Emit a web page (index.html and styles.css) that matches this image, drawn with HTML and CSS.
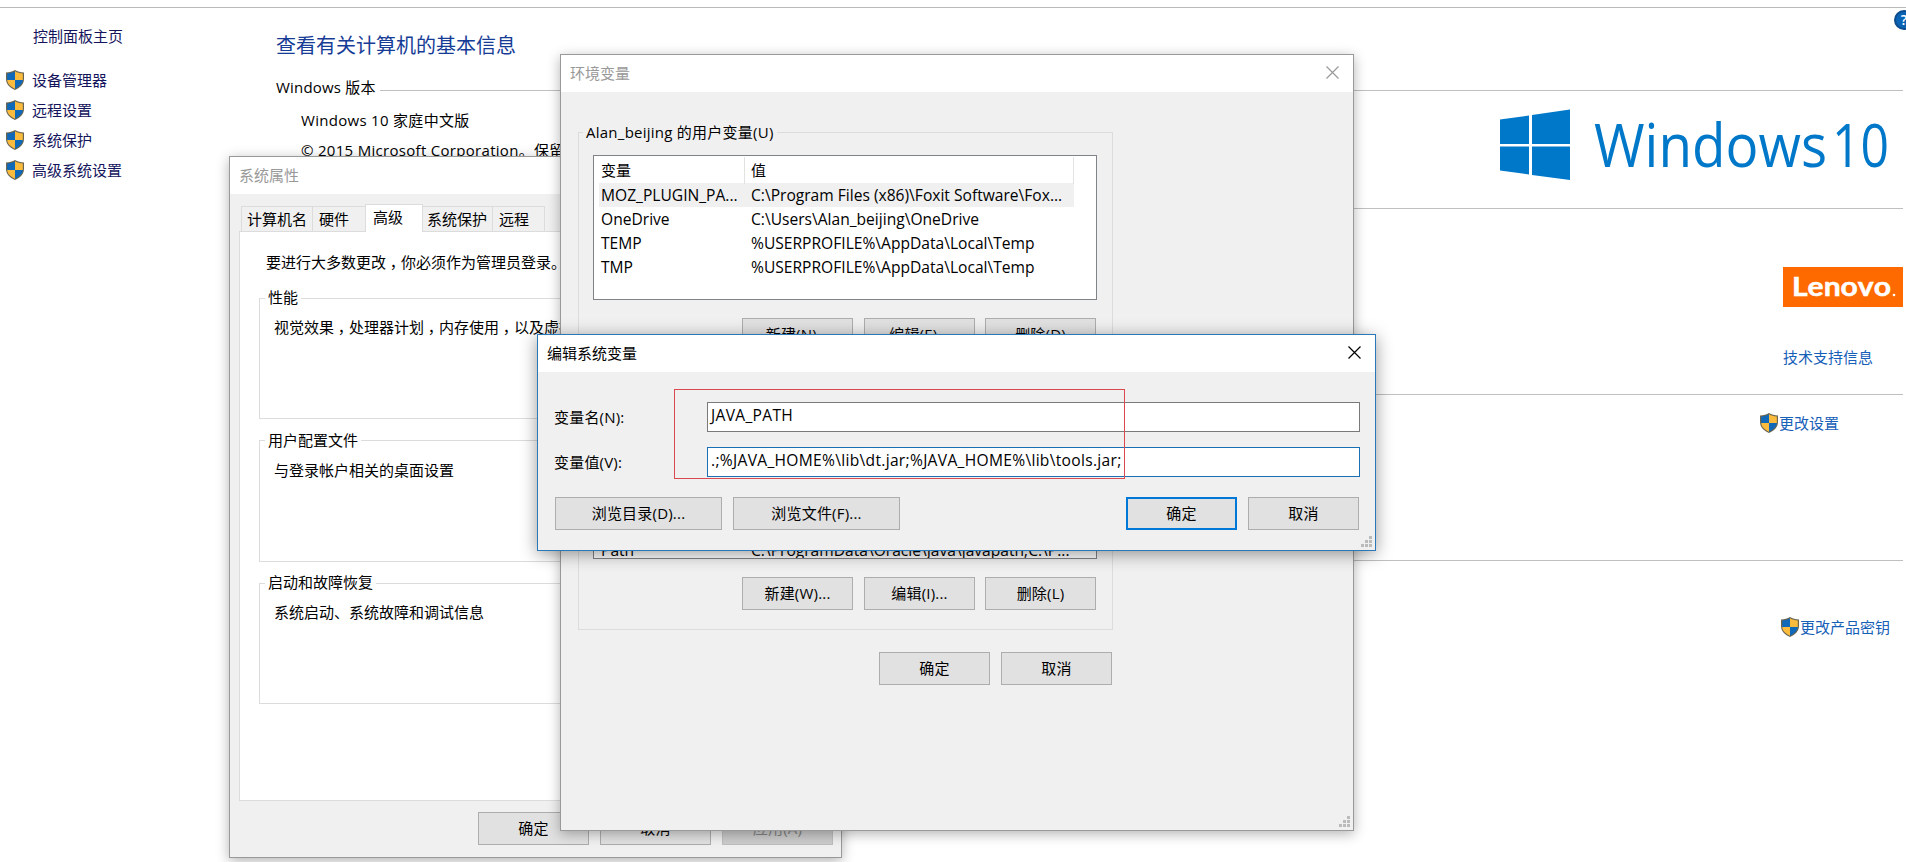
FILE: index.html
```html
<!DOCTYPE html>
<html lang="zh-CN">
<head>
    <meta charset="UTF-8">
    <meta name="viewport" content="width=device-width, initial-scale=1.0">
    <title>系统</title>
    <link rel="stylesheet" href="styles.css">
</head>
<body>
    <!-- Shared icons -->
    <svg class="defs" width="0" height="0">
        <symbol id="shield" viewBox="0 0 18 20">
            <path fill="#6b6550" d="M9 0C6.500 1.600 3.500 2.400 0 2.500V9c0 5 3.500 8.600 9 11 5.500-2.400 9-6 9-11V2.500C14.500 2.400 11.500 1.600 9 0z"/>
            <path fill="#0f68b8" d="M9 1.300C6.800 2.600 4.200 3.400 1.200 3.600V10H9z"/>
            <path fill="#fbbc3d" d="M9 1.300c2.200 1.300 4.800 2.100 7.800 2.300V10H9z"/>
            <path fill="#fbbc3d" d="M1.200 10H9v8.800C4.400 16.700 1.500 13.900 1.200 10z"/>
            <path fill="#0f68b8" d="M16.800 10H9v8.800c4.600-2.100 7.500-4.900 7.800-8.800z"/>
        </symbol>
        <symbol id="close" viewBox="0 0 13 13">
            <path fill="none" stroke="currentColor" stroke-width="1.200" d="M.5.5l12 12M12.500.5l-12 12"/>
        </symbol>
        <symbol id="grip" viewBox="0 0 11 11">
            <path fill="currentColor" d="M8 0h3v3H8zM4 4h3v3H4zM8 4h3v3H8zM0 8h3v3H0zM4 8h3v3H4zM8 8h3v3H8z"/>
        </symbol>
    </svg>

    <div class="page">
        <nav class="sidebar">
            <a class="home">控制面板主页</a>
            <a><svg class="shield"><use href="#shield"/></svg>设备管理器</a>
            <a><svg class="shield"><use href="#shield"/></svg>远程设置</a>
            <a><svg class="shield"><use href="#shield"/></svg>系统保护</a>
            <a><svg class="shield"><use href="#shield"/></svg>高级系统设置</a>
        </nav>

        <main class="content">
            <h1>查看有关计算机的基本信息</h1>

            <div class="section-title"><span>Windows 版本</span></div>
            <section class="edition">
                <div class="edition-text">
                    <p>Windows 10 家庭中文版</p>
                    <p>© 2015 Microsoft Corporation。保留所有权利。</p>
                </div>
                <svg class="win-logo" width="390" height="80" viewBox="0 0 390 80">
                    <g fill="#0078c9">
                        <path d="M0 14.500L29 10.500V39H0zM32 10L70 4.500V39H32zM0 41.500H29V69.500L0 65.500zM32 41.500H70V75L32 70z"/>
                        <text x="94" y="61.500" textLength="233" lengthAdjust="spacingAndGlyphs">Windows</text>
                        <text x="332" y="61.500" textLength="57" lengthAdjust="spacingAndGlyphs">10</text>
                    </g>
                </svg>
            </section>

            <section class="support">
                <div class="support-box">
                    <svg class="lenovo" width="120" height="40" viewBox="0 0 120 40">
                        <rect width="120" height="40" fill="#ff6a00"/>
                        <text x="9" y="29" textLength="99" lengthAdjust="spacingAndGlyphs">Lenovo</text>
                        <circle cx="111" cy="28" r="1.300" fill="#fff"/>
                    </svg>
                    <a>技术支持信息</a>
                </div>
            </section>

            <section class="settings">
                <a><svg class="shield"><use href="#shield"/></svg>更改设置</a>
            </section>

            <section class="activation">
                <a><svg class="shield"><use href="#shield"/></svg>更改产品密钥</a>
            </section>
        </main>
        <div class="help">?</div>
    </div>

    <!-- System properties -->
    <div class="window sys-window">
        <div class="titlebar">系统属性</div>
        <div class="tabs">
            <span class="tab tab-name">计算机名</span>
            <span class="tab tab-hardware">硬件</span>
            <span class="tab tab-advanced active">高级</span>
            <span class="tab tab-protect">系统保护</span>
            <span class="tab tab-remote">远程</span>
        </div>
        <div class="tab-page">
            <p class="hint">要进行大多数更改<i>，</i>你必须作为管理员登录。</p>
            <fieldset>
                <legend>性能</legend>
                视觉效果<i>，</i>处理器计划<i>，</i>内存使用<i>，</i>以及虚拟内存
            </fieldset>
            <fieldset>
                <legend>用户配置文件</legend>
                与登录帐户相关的桌面设置
            </fieldset>
            <fieldset>
                <legend>启动和故障恢复</legend>
                系统启动、系统故障和调试信息
            </fieldset>
        </div>
        <div class="buttons">
            <button>确定</button>
            <button>取消</button>
            <button disabled>应用(A)</button>
        </div>
    </div>

    <!-- Environment variables -->
    <div class="window env-window">
        <div class="titlebar">环境变量<svg class="close"><use href="#close"/></svg></div>
        <fieldset class="user-vars">
            <legend>Alan_beijing 的用户变量(U)</legend>
            <div class="list">
                <div class="row head"><span>变量</span><span>值</span></div>
                <div class="row selected"><span>MOZ_PLUGIN_PA...</span><span>C:\Program Files (x86)\Foxit Software\Fox...</span></div>
                <div class="row"><span>OneDrive</span><span>C:\Users\Alan_beijing\OneDrive</span></div>
                <div class="row"><span>TEMP</span><span>%USERPROFILE%\AppData\Local\Temp</span></div>
                <div class="row"><span>TMP</span><span>%USERPROFILE%\AppData\Local\Temp</span></div>
            </div>
            <div class="buttons">
                <button>新建(N)...</button>
                <button>编辑(E)...</button>
                <button>删除(D)</button>
            </div>
        </fieldset>
        <fieldset class="system-vars">
            <legend>系统变量(S)</legend>
            <div class="list">
                <div class="row"><span>Path</span><span>C:\ProgramData\Oracle\Java\javapath;C:\P...</span></div>
            </div>
            <div class="buttons">
                <button>新建(W)...</button>
                <button>编辑(I)...</button>
                <button>删除(L)</button>
            </div>
        </fieldset>
        <div class="buttons env-actions">
            <button>确定</button>
            <button>取消</button>
        </div>
        <svg class="grip"><use href="#grip"/></svg>
    </div>

    <!-- Edit system variable -->
    <div class="window edit-window">
        <div class="titlebar">编辑系统变量<svg class="close"><use href="#close"/></svg></div>
        <div class="field">
            <label>变量名(N):</label>
            <div class="input">JAVA_PATH</div>
        </div>
        <div class="field">
            <label>变量值(V):</label>
            <div class="input focus">.;%JAVA_HOME%\lib\dt.jar;%JAVA_HOME%\lib\tools.jar;</div>
        </div>
        <div class="buttons">
            <button class="wide">浏览目录(D)...</button>
            <button class="wide">浏览文件(F)...</button>
            <button class="default">确定</button>
            <button>取消</button>
        </div>
        <div class="highlight"></div>
        <svg class="grip"><use href="#grip"/></svg>
    </div>
</body>
</html>
```
FILE: styles.css
```css
* {
    box-sizing: border-box;
}

body {
    margin: 0;
    height: 862px;
    position: relative;
    overflow: hidden;
    background-color: #fff;
    color: #000;
    font-family: "Open Sans", "Noto Sans CJK SC", sans-serif;
    font-size: 15px;
    font-weight: 400;
    font-kerning: none;
    line-height: 20px;
    white-space: nowrap;
}

p, h1 {
    margin: 0;
    font-weight: inherit;
}

/* full width comma, centred in its cell */
i {
    display: inline-block;
    width: 15px;
    font-style: normal;
    font-feature-settings: "halt";
    text-align: center;
}

.defs {
    position: absolute;
}

/* Control panel page */
.page {
    display: flex;
    height: 855px;
    margin-top: 7px;
    border-top: 1px solid #b9b9b9;
    position: relative;
}

.sidebar {
    width: 276px;
    padding: 18px 0 0 6px;
}

.sidebar a {
    display: flex;
    align-items: center;
    height: 20px;
    margin-bottom: 10px;
    padding-bottom: 1px;
    color: #14145c;
}

.sidebar .home {
    padding-left: 27px;
    margin-bottom: 24px;
}

.shield {
    width: 18px;
    height: 20px;
    flex: none;
}

.sidebar .shield {
    margin-right: 8px;
}

.content {
    width: 1627px;
}

h1 {
    margin-top: 23px;
    font-size: 20px;
    line-height: 30px;
    color: #163c96;
}

.section-title {
    display: flex;
    align-items: center;
    height: 20px;
    margin-top: 17px;
    letter-spacing: 0.2px;
}

.section-title span {
    margin-right: 4px;
    padding-bottom: 3px;
}

.section-title::after {
    content: "";
    flex: 1;
    height: 1px;
    margin-top: 5px;
    background-color: #c0c0c0;
}

.edition {
    display: flex;
    justify-content: space-between;
    height: 110px;
    padding: 12px 13px 0 25px;
    letter-spacing: 0.3px;
}

.edition p {
    margin-bottom: 10px;
}

.win-logo {
    margin-top: -5px;
    overflow: visible;
    font-family: "Open Sans", sans-serif;
    font-size: 60px;
    font-weight: 400;
    letter-spacing: 0;
}

.support, .settings, .activation {
    border-top: 1px solid #c0c0c0;
}

.content section a {
    display: flex;
    align-items: center;
    color: #1660b8;
}

.content section .shield {
    margin-right: 1px;
}

.support {
    display: flex;
    justify-content: flex-end;
    height: 186px;
    padding-top: 58px;
}

.lenovo {
    display: block;
    margin-bottom: 40px;
    font-family: Lato, sans-serif;
    font-size: 27px;
    font-weight: 700;
    fill: #fff;
    stroke: #fff;
    stroke-width: 0.5px;
}

.lenovo rect, .lenovo circle {
    stroke: none;
}

.settings {
    height: 166px;
    padding: 18px 0 0 1484px;
}

.activation {
    padding: 56px 0 0 1505px;
}

.help {
    position: absolute;
    left: 1894px;
    top: 2px;
    width: 20px;
    height: 20px;
    border: 2px solid #0b4c8c;
    border-radius: 50%;
    background-color: #0a63b5;
    color: #fff;
    font-size: 14px;
    font-weight: 600;
    line-height: 16px;
    text-align: center;
}

/* Windows */
.window {
    position: absolute;
    border: 1px solid #999;
    background-color: #f0f0f0;
    box-shadow: 0 3px 12px rgba(0, 0, 0, 0.3);
}

.titlebar {
    display: flex;
    align-items: center;
    justify-content: space-between;
    height: 37px;
    padding: 0 14px 2px 9px;
    background-color: #fff;
    color: #999;
}

.close {
    width: 13px;
    height: 13px;
}

.grip {
    position: absolute;
    right: 3px;
    bottom: 3px;
    width: 11px;
    height: 11px;
    color: #bbb;
}

.buttons {
    display: flex;
    gap: 11px;
}

button {
    width: 111px;
    height: 33px;
    padding: 0 0 2px;
    border: 1px solid #adadad;
    background-color: #e1e1e1;
    color: #000;
    font: inherit;
    font-kerning: none;
    letter-spacing: 0.2px;
}

button:disabled {
    border-color: #bfbfbf;
    background-color: #ccc;
    color: #838383;
}

fieldset {
    min-width: 0;
    margin: 0;
    padding: 0;
    border: 1px solid #dcdcdc;
}

legend {
    height: 20px;
    padding: 0 3px;
    line-height: 19px;
}

/* System properties */
.sys-window {
    left: 229px;
    top: 156px;
    width: 613px;
    height: 702px;
}

.tabs {
    display: flex;
    align-items: flex-end;
    height: 37px;
    padding-left: 11px;
}

.tab {
    height: 25px;
    padding-left: 5px;
    border: 1px solid #dcdcdc;
    border-width: 1px 1px 0 0;
    line-height: 25px;
}

.tab-name {
    width: 72px;
    border-left-width: 1px;
}

.tab-hardware {
    width: 52px;
    padding-left: 6px;
    border-right: 0;
}

.tab-advanced {
    width: 58px;
    padding-left: 7px;
}

.tab-protect {
    width: 70px;
    padding-left: 4px;
}

.tab-remote {
    width: 52px;
    padding-left: 6px;
}

.tab.active {
    height: 28px;
    margin-bottom: -1px;
    border-left-width: 1px;
    background-color: #fff;
    line-height: 24px;
    position: relative;
}

.tab-page {
    width: 593px;
    height: 570px;
    margin-left: 9px;
    padding: 20px 19px 0;
    border: 1px solid #dcdcdc;
    background-color: #fff;
}

.hint {
    padding-left: 7px;
    margin-bottom: 16px;
}

.tab-page fieldset {
    height: 131px;
    margin-bottom: 11.5px;
    padding: 9px 0 0 14px;
}

.tab-page legend {
    margin-left: -9px;
}

.sys-window > .buttons {
    padding: 11px 0 0 248px;
}

/* Environment variables */
.env-window {
    left: 560px;
    top: 54px;
    width: 794px;
    height: 777px;
}

.env-window fieldset {
    width: 535px;
    margin-left: 17px;
    padding: 13px 14px 0;
}

.env-window legend {
    margin-left: -10px;
    letter-spacing: 0.25px;
    line-height: 20px;
}

.user-vars {
    height: 240px;
    margin-top: 30px;
}

.list {
    width: 504px;
    height: 145px;
    padding: 1px 5px;
    border: 1px solid #7f8388;
    background-color: #fff;
    font-size: 15.6px;
}

.row {
    display: grid;
    grid-template-columns: 150px 329px;
    width: 475px;
    height: 24px;
    padding-left: 2px;
    line-height: 24px;
}

.row.selected {
    background-color: #f0f0f0;
}

.row.head {
    height: 26px;
    line-height: 27px;
    padding-left: 0;
    grid-template-columns: 146px 329px;
    font-size: 15px;
}

.row.head span {
    border-right: 1px solid #e2e2e2;
    padding-left: 2px;
}

.row.head span + span {
    padding-left: 6px;
}

.list + .buttons {
    justify-content: flex-end;
    margin-top: 18px;
    padding-right: 1px;
}

.list + .buttons button:last-child {
    margin-left: -1px;
    margin-right: 1px;
}

.list + .buttons button:first-child {
    margin-left: 1px;
}

.system-vars {
    height: 270px;
    margin-top: -2px;
}

.system-vars .list {
    height: 166px;
    padding-top: 144px;
    overflow: hidden;
}

.env-actions {
    padding: 22px 0 0 318px;
}

/* Edit variable */
.edit-window {
    left: 537px;
    top: 334px;
    width: 839px;
    height: 217px;
    border-color: #2b78b8;
    box-shadow: 0 3px 16px rgba(0, 0, 0, 0.4);
}

.edit-window .titlebar {
    margin-bottom: 30px;
    padding-right: 14px;
    color: #000;
}

.field {
    display: flex;
    height: 30px;
    margin-bottom: 15px;
    padding-left: 16px;
}

.field label {
    width: 153px;
    line-height: 30px;
    letter-spacing: 0.2px;
}

.input {
    width: 653px;
    padding-left: 3px;
    border: 1px solid #7a7a7a;
    background-color: #fff;
    font-size: 15.6px;
    letter-spacing: 0.3px;
    line-height: 25px;
}

.input.focus {
    border-color: #1a6fb5;
}

.edit-window .buttons {
    padding: 5px 0 0 17px;
}

.wide {
    width: 167px;
}

.default {
    margin-left: 215px;
    border: 2px solid #0078d7;
}

/* Red frame around the two values */
.highlight {
    position: absolute;
    left: 136px;
    top: 54px;
    width: 451px;
    height: 90px;
    border: 1px solid #d9494f;
}
```
